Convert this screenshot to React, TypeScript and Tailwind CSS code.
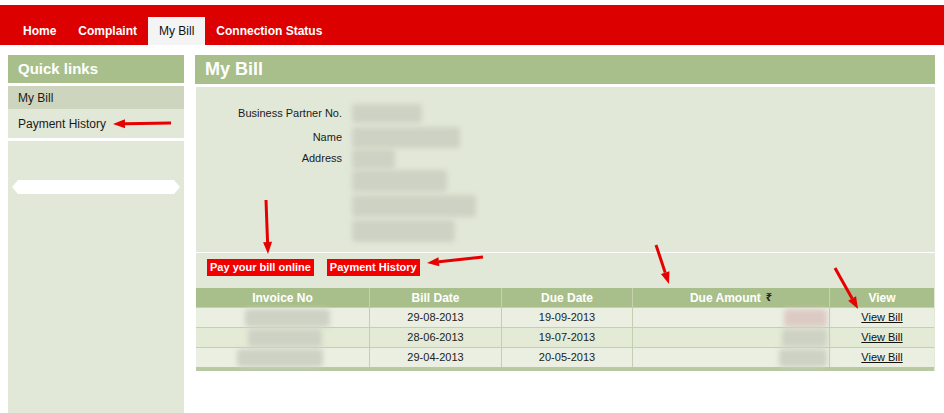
import React from 'react';

const FONT = { fontFamily: '"Liberation Sans", Arial, sans-serif' };

function Arrow({ x1, y1, x2, y2 }: { x1: number; y1: number; x2: number; y2: number }) {
  const dx = x2 - x1;
  const dy = y2 - y1;
  const len = Math.hypot(dx, dy);
  const ux = dx / len;
  const uy = dy / len;
  const hl = 12;
  const hw = 4.5;
  const bx = x2 - ux * hl;
  const by = y2 - uy * hl;
  const pts = `${x2},${y2} ${bx - uy * hw},${by + ux * hw} ${bx + uy * hw},${by - ux * hw}`;
  return (
    <g>
      <line x1={x1} y1={y1} x2={bx} y2={by} stroke="#e60000" strokeWidth={3} />
      <polygon points={pts} fill="#e60000" />
    </g>
  );
}

function Smudge({ w, h, ml = 0, tint = 'bg-[#cdd2c4]' }: { w: number; h: number; ml?: number; tint?: string }) {
  return (
    <div
      className={`${tint} blur-[2.5px] rounded-[4px]`}
      style={{ width: w, height: h, marginLeft: ml }}
    />
  );
}

const rows = [
  { inv: 85, invOff: 49, bill: '29-08-2013', due: '19-09-2013', amt: 43, tint: 'bg-[#dccbc4]' },
  { inv: 74, invOff: 52, bill: '28-06-2013', due: '19-07-2013', amt: 45, tint: 'bg-[#cdd2c4]' },
  { inv: 86, invOff: 41, bill: '29-04-2013', due: '20-05-2013', amt: 48, tint: 'bg-[#cdd2c4]' },
];

export default function App() {
  return (
    <div className="relative w-[944px] h-[413px] bg-white overflow-hidden" style={FONT}>
      {/* top nav */}
      <div className="pt-[5px]">
        <div className="h-[40px] bg-[#dc0000] flex items-end pl-[12px]">
          <div className="h-[28px] px-[11px] flex items-center text-white font-bold text-[12px]">Home</div>
          <div className="h-[28px] px-[11px] flex items-center text-white font-bold text-[12px]">Complaint</div>
          <div className="h-[28px] px-[11px] flex items-center bg-[#f4f4f4] text-[#111] text-[12px]">My Bill</div>
          <div className="h-[28px] px-[11px] flex items-center text-white font-bold text-[12px]">Connection Status</div>
        </div>
      </div>

      <div className="flex mt-[10px] h-[358px]">
        {/* sidebar */}
        <div className="ml-[8px] w-[176px] flex flex-col">
          <div className="h-[28px] bg-[#a9bf8b] text-white font-bold text-[15px] pl-[10px] flex items-center">Quick links</div>
          <div className="h-[3px]" />
          <div className="h-[23px] bg-[#cdd5bf] text-[12px] text-[#1a1a1a] pl-[10px] pt-[1px] flex items-center">My Bill</div>
          <div className="h-[29px] bg-[#e2e8d8] text-[12px] text-[#1a1a1a] pl-[10px] pt-[1px] flex items-center">Payment History</div>
          <div className="h-[3px]" />
          <div className="flex-1 bg-[#e2e8d8] pt-[39px] px-[4px]">
            <div className="h-[14px] bg-white [clip-path:polygon(6px_0,calc(100%-6px)_0,100%_50%,calc(100%-6px)_100%,6px_100%,0_50%)]" />
          </div>
        </div>

        {/* main */}
        <div className="ml-[11px] w-[740px] flex flex-col">
          <div className="h-[29px] bg-[#a9bf8b] text-white font-bold text-[18px] pl-[10px] flex items-center">My Bill</div>
          <div className="h-[3px]" />
          <div className="ml-[1px] bg-[#e2e8d8]">
            <div className="pt-[14px] pb-[9px] grid grid-cols-[146px_auto] gap-x-[10px] text-[11px] text-[#1a1a1a]">
              <div className="h-[24px] flex items-center justify-end">Business Partner No.</div>
              <div className="h-[24px] flex items-center"><Smudge w={70} h={19} /></div>
              <div className="h-[24px] flex items-center justify-end">Name</div>
              <div className="h-[24px] flex items-center"><Smudge w={108} h={21} /></div>
              <div className="h-[19px] flex items-center justify-end">Address</div>
              <div className="h-[19px] flex items-center"><Smudge w={43} h={20} /></div>
              <div className="h-[25px]" />
              <div className="h-[25px] flex items-center"><Smudge w={95} h={22} /></div>
              <div className="h-[25px]" />
              <div className="h-[25px] flex items-center"><Smudge w={124} h={22} /></div>
              <div className="h-[25px]" />
              <div className="h-[25px] flex items-center"><Smudge w={103} h={22} /></div>
            </div>
            <div className="border-t border-white flex gap-[13px] pl-[11px] pt-[6px] pb-[12px]">
              <div className="h-[17px] px-[3px] bg-[#f20000] text-white font-bold text-[11px] flex items-center">Pay your bill online</div>
              <div className="h-[17px] px-[3px] bg-[#f20000] text-white font-bold text-[11px] flex items-center">Payment History</div>
            </div>
            {/* table */}
            <div className="w-[738px] border-b-[4px] border-[#b9c9a2]">
              <div className="grid grid-cols-[174px_132px_131px_197px_104px] h-[19px] bg-[#a9bf8b] text-white font-bold text-[12px]">
                <div className="flex items-center justify-center border-r border-[#c4d2ae]">Invoice No</div>
                <div className="flex items-center justify-center border-r border-[#c4d2ae]">Bill Date</div>
                <div className="flex items-center justify-center border-r border-[#c4d2ae]">Due Date</div>
                <div className="flex items-center justify-center border-r border-[#c4d2ae] gap-[5px]">
                  Due Amount <span className="text-[11px] text-[#222] font-bold" style={{ fontFamily: '"Noto Sans", "DejaVu Sans", sans-serif' }}>₹</span>
                </div>
                <div className="flex items-center justify-center">View</div>
              </div>
              {rows.map((r, i) => (
                <div
                  key={i}
                  className={`grid grid-cols-[174px_132px_131px_197px_104px] h-[20px] text-[11px] text-[#222] border-t border-[#c4cfb0] ${i === 1 ? 'bg-[#e3ebd6]' : 'bg-[#eaefe2]'}`}
                >
                  <div className="flex items-center border-r border-[#c4cfb0]">
                    <Smudge w={r.inv} h={18} ml={r.invOff} />
                  </div>
                  <div className="flex items-center justify-center border-r border-[#c4cfb0]">{r.bill}</div>
                  <div className="flex items-center justify-center border-r border-[#c4cfb0]">{r.due}</div>
                  <div className="flex items-center justify-end pr-[2px] border-r border-[#c4cfb0]">
                    <Smudge w={r.amt} h={18} tint={r.tint} />
                  </div>
                  <div className="flex items-center justify-center">
                    <span className="underline text-[#111]">View Bill</span>
                  </div>
                </div>
              ))}
            </div>
          </div>
        </div>
      </div>

      {/* annotation arrows */}
      <svg className="absolute left-0 top-0 pointer-events-none" width={944} height={413}>
        <Arrow x1={171} y1={123} x2={113} y2={124} />
        <Arrow x1={266} y1={200} x2={268} y2={254} />
        <Arrow x1={483} y1={257} x2={427} y2={263} />
        <Arrow x1={656} y1={245} x2={669} y2={284} />
        <Arrow x1={835} y1={268} x2={858} y2={309} />
      </svg>
    </div>
  );
}
